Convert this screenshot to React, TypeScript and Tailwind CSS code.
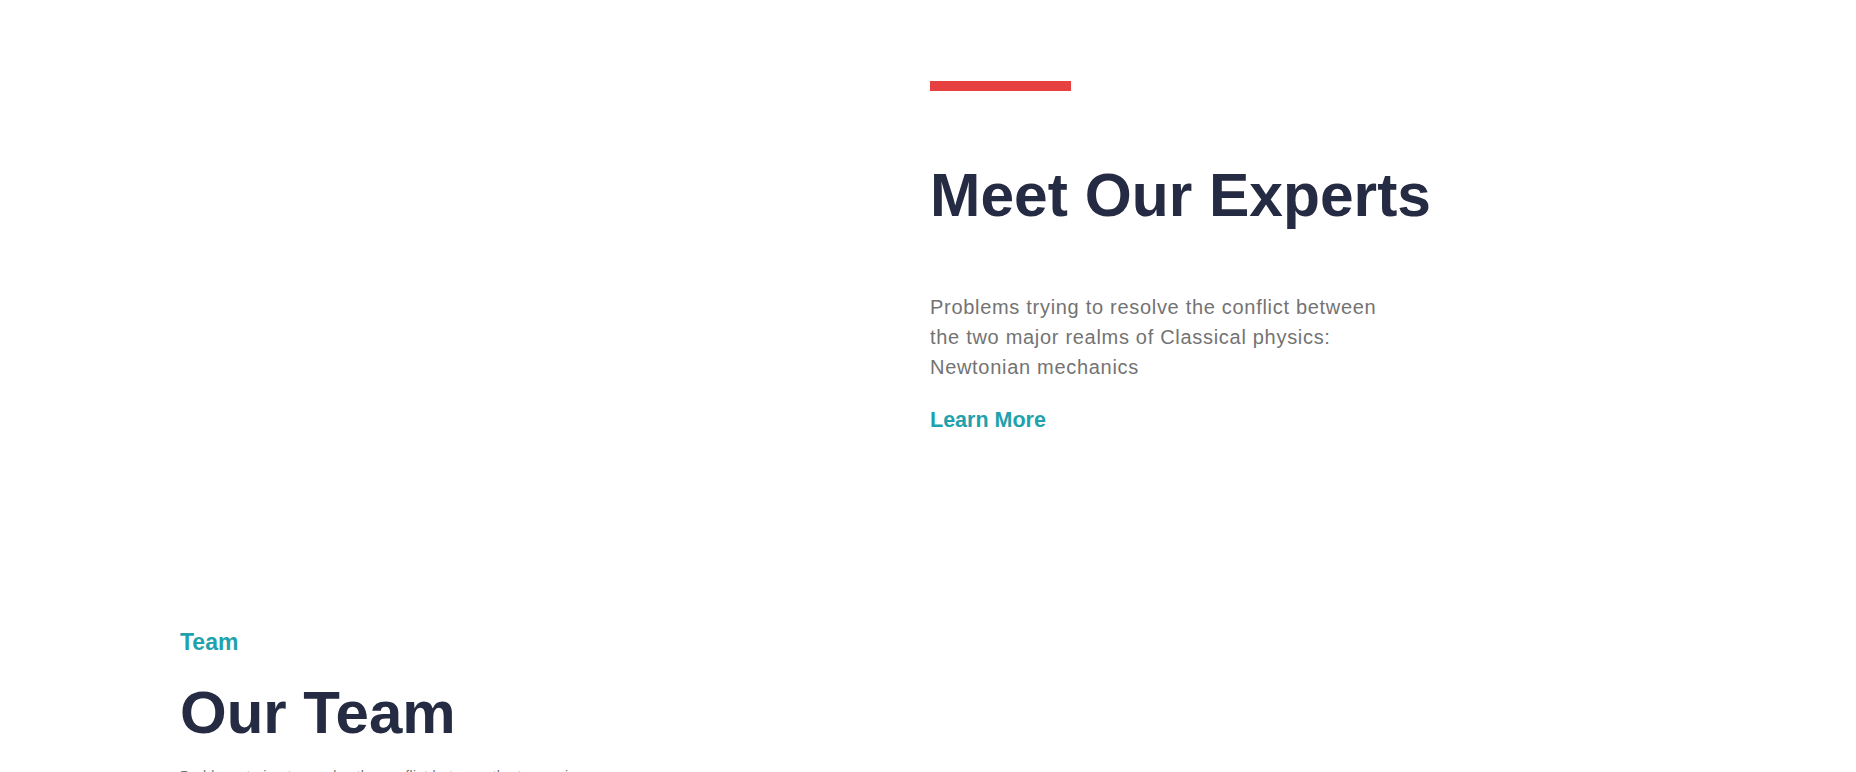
import React from 'react';

const App: React.FC = () => {
  return (
    <div className="min-h-screen bg-white font-['Liberation_Sans',Arial,sans-serif] overflow-hidden">
      {/* Experts */}
      <section className="grid grid-cols-[930px_1fr] pt-[81px]">
        <div></div>
        <div className="flex flex-col items-start">
          <div className="w-[141px] h-[10px] bg-[#E74040]"></div>
          <h2 className="mt-[64px] text-[60.5px] leading-[80px] font-bold text-[#252B42]">
            Meet Our Experts
          </h2>
          <p className="mt-[57px] max-w-[460px] text-[20px] leading-[30px] tracking-[0.7px] text-[#737373]">
            Problems trying to resolve the conflict between the two major realms of Classical physics: Newtonian mechanics
          </p>
          <a href="#" className="mt-[23px] text-[21.5px] leading-[30px] font-bold text-[#1FA2AD]">
            Learn More
          </a>
        </div>
      </section>

      {/* Team */}
      <section className="px-[180px] mt-[192px]">
        <p className="text-[23px] leading-[30px] font-bold text-[#1FA2AD]">Team</p>
        <h2 className="mt-[16px] text-[60px] leading-[80px] font-bold text-[#252B42]">Our Team</h2>
        <p className="mt-[13px] max-w-[440px] text-[14px] leading-[20px] tracking-[0.4px] text-[#737373]">
          Problems trying to resolve the conflict between the two major realms of Classical physics: Newtonian mechanics
        </p>
      </section>
    </div>
  );
};

export default App;
